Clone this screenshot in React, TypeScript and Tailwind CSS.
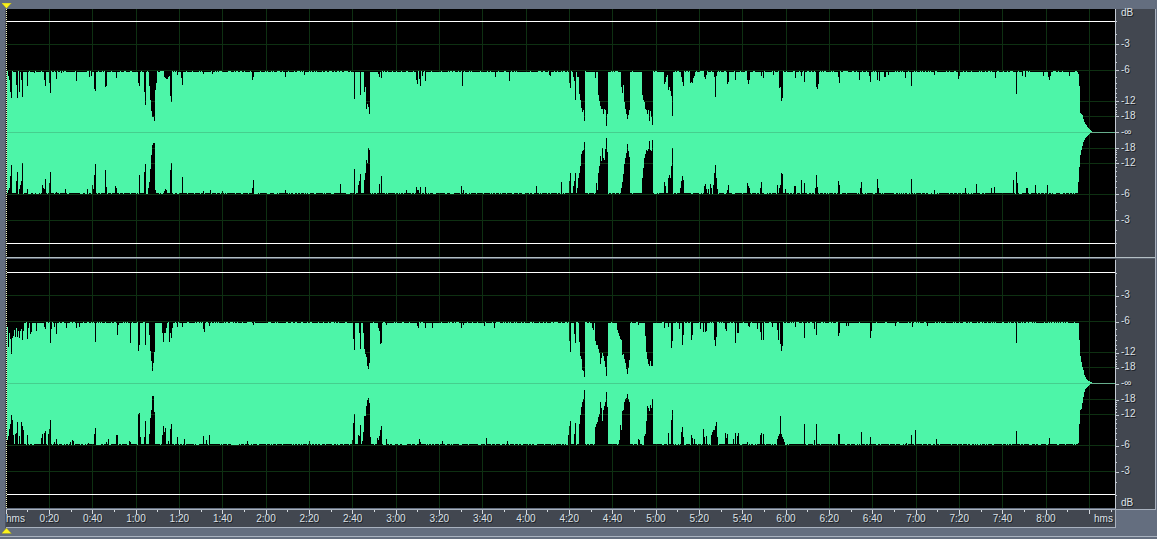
type Envelope = { upper: string; lower: string };

type Channel = {
  name: string;
  height: number;
  center: number;
  dips: Envelope;
  tail: Envelope;
};

const PLOT_WIDTH = 1109;
const ORIGIN = 6;
const TAIL_START = 1078;
const SECONDS_20 = 130 / 3;
const FULL_SCALE = 124;

// Each entry is "column:depth", the depth counted inwards from the level ceiling.
const LEFT: Channel = {
  name: 'Left channel waveform',
  height: 248,
  center: 123,
  dips: {
    upper:
      '8:4 9:8 10:21 11:26 16:13 17:27 19:20 21:8 22:25 27:14 34:2 44:8 45:15 49:11 50:21 56:7 61:2 76:9 89:5 91:5 94:17 95:20 105:15 106:15 116:6 138:11 139:14 144:20 145:34 149:14 150:28 151:40 152:45 153:45 154:49 155:18 156:11 164:5 165:7 166:7 167:8 168:5 169:4 170:25 171:30 177:3 181:6 182:13 203:3 212:2 252:8 253:5 285:5 304:3 354:27 360:23 364:20 365:15 366:37 367:33 368:35 369:42 378:3 379:5 381:6 416:8 417:12 419:7 420:14 422:5 425:10 462:14 495:5 509:10 549:3 550:5 569:11 570:17 573:5 574:10 575:28 577:5 578:5 579:22 580:28 581:37 582:40 583:38 584:50 595:7 598:24 599:29 600:34 601:37 602:38 603:43 604:38 605:38 606:54 607:42 621:15 622:21 623:14 624:31 625:37 626:42 627:47 628:43 629:38 642:24 643:29 644:30 645:37 646:38 647:43 648:38 649:50 650:39 651:46 652:54 664:12 665:10 666:5 667:3 668:18 669:15 670:19 671:24 672:45 681:5 682:11 683:15 690:11 691:11 692:11 693:6 694:4 704:5 705:8 706:4 714:5 715:25 716:4 727:12 728:10 735:8 747:9 748:12 749:8 761:5 763:7 773:3 779:16 780:16 781:29 782:26 795:6 801:4 804:10 816:15 817:17 818:12 838:5 839:11 859:8 869:5 870:10 877:8 879:9 884:6 885:5 888:3 905:6 911:14 934:3 958:8 959:4 995:6 1016:23 1022:4 1025:6 1043:4 1048:6 1049:8 1050:4 1069:5',
    lower:
      '8:3 9:5 10:18 11:29 16:12 17:22 19:4 20:8 21:12 22:30 27:5 42:8 43:5 44:4 45:14 49:10 50:21 56:2 65:4 87:4 92:9 93:4 94:18 95:29 105:23 106:6 115:8 116:6 139:18 144:21 145:29 148:5 149:12 150:24 151:38 152:48 153:50 154:50 155:3 164:2 165:4 166:3 170:23 171:30 182:16 203:3 210:4 222:2 252:5 253:13 285:3 340:9 354:25 358:8 359:12 360:19 364:13 365:20 366:33 367:30 368:46 369:43 379:9 381:18 406:3 416:6 417:3 418:3 420:6 425:6 461:7 463:3 536:7 561:11 569:12 570:20 573:8 574:13 575:20 577:5 578:16 579:20 580:27 581:40 582:42 583:43 584:51 596:10 597:3 598:20 599:28 600:37 601:32 602:45 603:35 604:34 605:44 606:55 607:42 621:5 622:12 623:19 624:30 625:36 626:40 627:49 628:42 629:37 642:15 643:26 644:36 645:40 646:43 647:43 648:45 649:52 650:43 651:43 652:53 664:11 665:7 668:15 669:19 670:15 671:27 672:45 680:5 681:12 682:17 683:13 704:7 705:9 706:4 708:5 710:9 711:6 713:8 714:20 715:28 716:15 717:5 727:3 728:8 747:10 748:7 749:5 760:5 761:11 777:8 779:6 780:8 781:20 782:19 785:5 794:8 795:8 801:13 804:10 815:5 816:18 817:7 838:12 839:8 860:5 861:11 877:14 878:5 911:14 934:3 965:5 976:9 991:6 994:6 1013:13 1016:22 1017:10 1026:6 1027:6 1035:9 1047:8',
  },
  // Half heights of the fade-out, one per column.
  tail: {
    upper: '58 46 19 18 17 13 10 8 7 5 4 3 2 1',
    lower: '50 35 23 18 14 10 8 6 5 4 3 2 1 1',
  },
};

const RIGHT: Channel = {
  name: 'Right channel waveform',
  height: 249,
  center: 124,
  dips: {
    upper:
      '7:4 8:24 9:10 10:16 11:31 12:15 13:13 14:8 15:15 16:5 17:14 18:8 19:15 20:9 21:6 22:17 23:8 27:16 28:5 30:12 31:9 36:8 44:4 45:6 50:20 51:6 54:5 56:11 66:6 76:5 79:4 95:20 117:12 118:3 130:20 138:29 139:22 145:22 149:13 150:28 151:38 152:49 153:40 154:30 162:10 163:20 164:10 165:10 166:5 169:19 170:10 171:15 172:6 177:4 182:5 203:6 204:9 209:3 253:3 353:16 354:27 359:10 360:26 363:10 364:26 365:31 366:34 367:44 368:46 369:40 378:5 379:8 380:21 381:20 386:3 417:3 418:5 425:6 432:5 461:6 463:3 484:3 494:5 569:18 570:29 574:11 575:20 579:19 580:34 581:37 582:47 583:48 584:54 592:5 593:8 595:18 596:22 597:23 598:27 599:30 600:41 601:35 602:31 603:33 604:38 605:45 606:53 607:33 617:8 618:10 619:13 620:16 621:18 622:33 623:31 624:36 625:41 626:46 627:52 628:45 629:37 638:3 645:13 646:29 647:36 648:41 649:43 650:38 651:43 652:43 664:5 668:4 671:25 672:19 679:6 682:22 683:13 691:18 692:12 700:6 703:9 705:9 706:8 714:17 715:23 716:14 725:6 726:8 735:20 737:10 738:10 748:4 749:4 757:7 760:9 761:17 763:17 772:4 777:8 778:17 780:21 781:28 782:23 795:5 804:15 814:7 816:12 838:13 839:10 846:3 848:3 870:16 871:8 895:3 912:4 927:3 1016:21',
    lower:
      '7:5 8:8 9:15 10:20 11:29 12:25 13:10 15:10 16:12 17:23 19:8 21:22 22:18 23:15 27:9 41:7 42:11 44:11 45:14 48:10 49:15 50:24 54:3 56:5 70:2 72:4 73:3 88:2 94:10 95:17 106:2 108:5 116:10 117:10 129:3 130:2 138:30 139:32 140:7 144:7 145:24 149:10 150:26 151:34 152:48 153:48 154:33 162:9 163:18 164:13 165:16 168:3 170:16 171:20 177:7 184:5 203:8 206:4 209:9 247:3 309:3 352:4 353:22 354:30 358:9 359:9 360:19 362:4 363:13 364:28 365:28 366:38 367:44 368:46 369:41 370:8 377:7 378:4 379:9 380:15 381:18 386:5 419:6 420:3 442:3 486:6 507:4 568:9 569:18 570:23 574:10 575:21 579:20 580:29 581:37 582:42 583:46 584:54 595:18 596:20 597:22 598:27 599:30 600:43 601:37 602:23 603:34 604:38 605:42 606:52 607:37 619:5 620:20 621:14 622:33 623:34 624:42 625:45 626:46 627:50 628:46 629:42 638:5 639:4 644:8 645:10 646:24 647:38 648:36 649:33 650:39 651:36 652:46 668:11 671:24 672:34 681:12 682:17 683:8 691:9 692:6 694:5 703:16 704:7 706:8 711:9 712:13 713:14 714:15 715:18 716:22 717:7 725:11 726:6 727:10 733:6 735:11 737:9 738:12 747:3 760:9 761:11 763:10 777:5 778:8 779:10 780:28 781:10 782:7 783:5 784:3 804:21 814:4 816:20 838:10 839:11 861:13 870:8 906:2 911:10 915:14 936:5 1016:13 1049:7',
  },
  tail: {
    upper: '60 43 27 21 16 13 8 6 4 3 2 2 1 1',
    lower: '60 41 27 26 20 14 9 6 5 4 3 2 1 1',
  },
};

const GRID_DB = [3, 6, 12, 18];
const MINOR_DB = Array.from({ length: 18 }, (_, i) => i + 1);
const TIMES = Array.from({ length: 24 }, (_, i) => {
  const s = (i + 1) * 20;
  return `${Math.floor(s / 60)}:${String(s % 60).padStart(2, '0')}`;
});

const level = (db: number) => Math.round(FULL_SCALE * Math.pow(10, -db / 20));

function parse(source: string) {
  const map = new Map<number, number>();
  for (const entry of source.split(' ')) {
    const [column, depth] = entry.split(':').map(Number);
    map.set(column, depth);
  }
  return map;
}

function wavePath({ center, dips, tail }: Channel) {
  const upper = parse(dips.upper);
  const lower = parse(dips.lower);
  const tailUp = tail.upper.split(' ').map(Number);
  const tailDown = tail.lower.split(' ').map(Number);
  let seed = 7 + center;
  const jitter = () => {
    seed = (seed * 1103515245 + 12345) % 2147483648;
    return seed / 2147483648 > 0.72 ? 1 : 0;
  };
  let path = '';
  for (let x = ORIGIN + 1; x < TAIL_START + tailUp.length; x++) {
    const t = x - TAIL_START;
    const up = t >= 0 ? tailUp[t] : 60 - (upper.get(x) ?? 0) + jitter();
    const down = t >= 0 ? tailDown[t] : 61 - (lower.get(x) ?? 0) + jitter();
    path += `M${x - ORIGIN} ${center - up}h1V${center + down}h-1z`;
  }
  return path;
}

function Waveform({ channel }: { channel: Channel }) {
  const { name, height, center } = channel;
  return (
    <svg
      role="img"
      aria-label={name}
      viewBox={`0 0 ${PLOT_WIDTH} ${height}`}
      preserveAspectRatio="none"
      shapeRendering="crispEdges"
      className={height === 248 ? 'block h-[248px] w-full bg-black' : 'block h-[249px] w-full bg-black'}
    >
      <g fill="#0e3012">
        {Array.from({ length: 25 }, (_, i) => (
          <rect key={i} x={Math.floor((i + 1) * SECONDS_20 + 0.01)} y={0} width={1} height={height} />
        ))}
        {GRID_DB.flatMap((db) => [-level(db), level(db)]).map((dy) => (
          <rect key={dy} x={0} y={center + dy} width={PLOT_WIDTH} height={1} />
        ))}
      </g>
      <path d={wavePath(channel)} fill="#4df5a8" />
      <rect x={0} y={center} width={1084} height={1} fill="#45cf8e" />
      <rect x={1084} y={center} width={PLOT_WIDTH - 1084} height={1} fill="#67ad8c" />
      <rect x={0} y={center - 111} width={PLOT_WIDTH} height={1} fill="#ffffff" />
      <rect x={0} y={center + 111} width={PLOT_WIDTH} height={1} fill="#ffffff" />
      <rect x={0} y={0} width={1} height={height} fill="#101010" />
      <line x1={0.5} x2={0.5} y1={0} y2={height} stroke="#f4f4c0" strokeDasharray="1 1" />
    </svg>
  );
}

function ScaleTicks({ channel }: { channel: Channel }) {
  const { height, center } = channel;
  return (
    <svg
      aria-hidden="true"
      viewBox={`0 0 5 ${height}`}
      shapeRendering="crispEdges"
      className="block w-[5px] shrink-0"
      fill="#c3cad3"
    >
      <rect x={0} y={0} width={1} height={height} />
      <rect x={1} y={center} width={3} height={1} />
      {MINOR_DB.flatMap((db) =>
        [-1, 1].map((side) => (
          <rect
            key={db * side}
            x={1}
            y={center + side * level(db)}
            width={GRID_DB.includes(db) ? 3 : 1}
            height={1}
          />
        )),
      )}
    </svg>
  );
}

const LABEL = 'flex items-end';

function CommonLabels() {
  return (
    <>
      <span className={`${LABEL} h-[26px]`}>-6</span>
      <span className={`${LABEL} h-[31px]`}>-12</span>
      <span className={`${LABEL} h-[15px]`}>-18</span>
      <span className={`${LABEL} h-4`}>-∞</span>
      <span className={`${LABEL} h-4`}>-18</span>
      <span className={`${LABEL} h-[15px]`}>-12</span>
      <span className={`${LABEL} h-[31px]`}>-6</span>
      <span className={`${LABEL} h-[26px]`}>-3</span>
    </>
  );
}

function ChannelRow({ channel, unitFirst }: { channel: Channel; unitFirst: boolean }) {
  return (
    <div className="flex">
      <div className="min-w-0 flex-1">
        <Waveform channel={channel} />
      </div>
      <div className="flex w-10 shrink-0 bg-[#424750]">
        <ScaleTicks channel={channel} />
        <div className="flex flex-col pl-px">
          {unitFirst && <span className={`${LABEL} h-[10px]`}>dB</span>}
          <span className={unitFirst ? `${LABEL} h-[31px]` : `${LABEL} h-[42px]`}>-3</span>
          <CommonLabels />
          {!unitFirst && <span className={`${LABEL} h-8`}>dB</span>}
        </div>
      </div>
    </div>
  );
}

function TimeRuler() {
  return (
    <div className="mr-10 border-r border-b border-[#a9b2bf] bg-[#424750]">
      <svg
        aria-hidden="true"
        viewBox={`0 0 ${PLOT_WIDTH} 4`}
        preserveAspectRatio="none"
        shapeRendering="crispEdges"
        className="block h-1 w-full"
        fill="#d5dae0"
      >
        {Array.from({ length: 52 }, (_, i) => (
          <rect
            key={i}
            x={Math.floor((i * SECONDS_20) / 2 + 0.01)}
            y={0}
            width={1}
            height={i % 2 === 0 ? 4 : 2}
          />
        ))}
      </svg>
      <div className="flex h-[13px] items-start leading-[10px]">
        <span className="w-0 grow-[650] basis-0 whitespace-nowrap">hms</span>
        {TIMES.map((time) => (
          <span key={time} className="w-0 grow-[1300] basis-0 text-center whitespace-nowrap">
            {time}
          </span>
        ))}
        <span className="flex w-0 grow-[1422] basis-0 justify-end">
          <span className="mr-[2px]">hms</span>
        </span>
      </div>
    </div>
  );
}

function Marker({ up = false }: { up?: boolean }) {
  return (
    <svg aria-hidden="true" viewBox="0 0 10 6" className="ml-[2px] block h-[6px] w-[10px]">
      {up ? (
        <path d="M4.5 0L9.5 5.5H-.5z" fill="#fbf31c" stroke="#8d8a28" strokeWidth=".4" />
      ) : (
        <path d="M-.5 0H9.5L4.5 5.5z" fill="#fbf31c" stroke="#8d8a28" strokeWidth=".4" />
      )}
    </svg>
  );
}

export default function App() {
  return (
    <main className="min-h-screen bg-[#646e7f] font-['Liberation_Sans',Arial,sans-serif] text-[10px] leading-3 text-[#dde1e6] [text-shadow:1px_1px_0_#1c2026]">
      <header className="flex h-[9px] items-end">
        <Marker />
      </header>
      <div className="flex pr-px">
        <div className="w-[6px] shrink-0 border-r border-[#4c5360]" />
        <div className="min-w-0 flex-1">
          <section className="border-r border-b border-[#a9b2bf]">
            <ChannelRow channel={LEFT} unitFirst />
            <div className="h-[2px] border-b border-[#59616e] bg-[#b4bfc4]" />
            <ChannelRow channel={RIGHT} unitFirst={false} />
          </section>
          <TimeRuler />
        </div>
      </div>
      <footer className="flex h-[9px] items-start border-b border-[#a9b2bf]">
        <Marker up />
      </footer>
    </main>
  );
}
